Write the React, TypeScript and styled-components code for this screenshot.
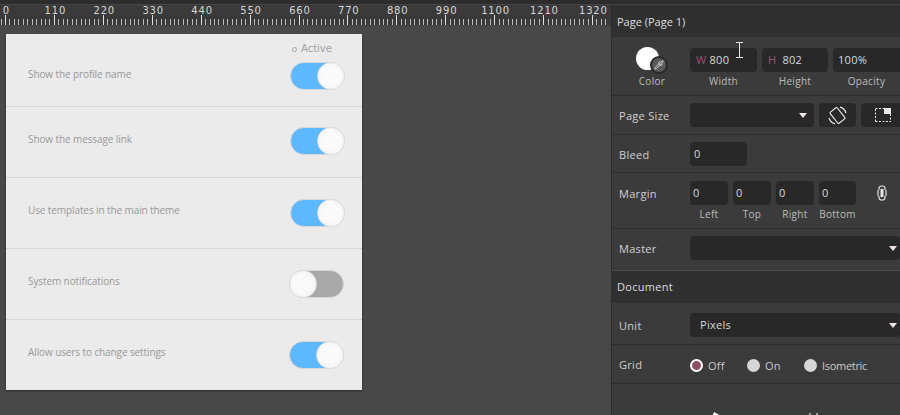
import React from "react";
import styled, { createGlobalStyle } from "styled-components";
import { Pipette } from "lucide-react";

const Global = createGlobalStyle`
  html, body { margin: 0; padding: 0; background: #484848; }
  body { font-family: "Open Sans", "Noto Sans", sans-serif; }
`;

const Shell = styled.div`
  position: relative;
  width: 900px;
  height: 415px;
  overflow: hidden;
  display: flex;
  flex-direction: column;
  background: #484848;
`;
const TopStrip = styled.div`
  height: 4px;
  background: #2d2d2d;
  border-bottom: 1px solid #444;
  flex: none;
`;
const Body = styled.div`
  flex: 1;
  min-height: 0;
  display: grid;
  grid-template-columns: 611px 289px;
`;
const CanvasColumn = styled.div`
  display: flex;
  flex-direction: column;
  min-width: 0;
`;
const Ruler = styled.div`
  height: 20px;
  background: #3a3a3a;
  flex: none;
  display: flex;
  flex-direction: column;
  overflow: hidden;
`;
const RulerLabels = styled.div`
  display: flex;
  height: 10px;
`;
const RulerLabel = styled.span<{ $shift?: number }>`
  flex: none;
  width: 48.92px;
  text-align: center;
  font: 10px/12px "DejaVu Sans", sans-serif;
  letter-spacing: 0.8px;
  color: #d6d6d6;
  margin-left: ${(p) => p.$shift ?? 0}px;
`;
const Stage = styled.div`
  flex: 1;
  padding: 9px 0 0 6px;
`;
const Card = styled.div`
  width: 356px;
  height: 356px;
  background: #ebebeb;
  box-shadow: 0 1px 2px rgba(0, 0, 0, 0.45);
  display: flex;
  flex-direction: column;
`;
const Row = styled.div<{ $first?: boolean; $inset: number; $lift?: number }>`
  height: ${(p) => (p.$first ? 73 : 71)}px;
  flex: none;
  box-sizing: border-box;
  display: flex;
  justify-content: space-between;
  align-items: ${(p) => (p.$first ? "flex-end" : "center")};
  padding: 0 ${(p) => p.$inset}px ${(p) => (p.$first ? 16 : (p.$lift ?? 0))}px 22px;
  border-bottom: 1px solid #d4d4d4;
  &:last-child { border-bottom: none; height: 70px; }
`;
const RowLabel = styled.span<{ $raise: number }>`
  font-size: 10px;
  line-height: 14px;
  letter-spacing: -0.1px;
  color: #999;
  margin-bottom: ${(p) => p.$raise}px;
`;
const SwitchStack = styled.div`
  display: flex;
  flex-direction: column;
  align-items: flex-end;
  gap: 6px;
`;
const ActiveLabel = styled.span`
  display: flex;
  align-items: center;
  gap: 4px;
  width: 53px;
  box-sizing: border-box;
  font: 10px/14px "DejaVu Sans", sans-serif;
  color: #a2a2a2;
  &::before {
    content: "";
    width: 3px;
    height: 3px;
    border: 1px solid #a2a2a2;
    border-radius: 50%;
  }
`;
const Switch = styled.div<{ $on: boolean }>`
  width: 55px;
  height: 28px;
  box-sizing: border-box;
  border-radius: 14px;
  border: 1px solid #d6d6d6;
  background: ${(p) => (p.$on ? "#5eb8ff" : "#a9a9a9")};
  display: flex;
  justify-content: ${(p) => (p.$on ? "flex-end" : "flex-start")};
`;
const Knob = styled.div`
  width: 28px;
  height: 28px;
  margin: -1px;
  border-radius: 50%;
  background: radial-gradient(circle at 50% 50%, #fafafa 45%, #f0f0f0 100%);
  border: 1px solid #dedede;
  box-sizing: border-box;
`;

const Panel = styled.div`
  background: #3b3b3b;
  border-left: 1px solid #2b2b2b;
  display: flex;
  flex-direction: column;
  font-size: 11px;
  letter-spacing: 0.3px;
  color: #d4d4d4;
  min-width: 0;
`;
const Header = styled.div<{ $tight?: boolean; $raise?: number }>`
  height: 32px;
  flex: none;
  box-sizing: border-box;
  background: #303030;
  padding: 0 0 ${(p) => p.$raise ?? 0}px 5px;
  display: flex;
  align-items: center;
  font-size: 11px;
  letter-spacing: ${(p) => (p.$tight ? 0 : 0.3)}px;
  color: #dedede;
`;
const PanelRow = styled.div<{ $h: number; $top: number; $light?: boolean }>`
  height: ${(p) => p.$h}px;
  flex: none;
  box-sizing: border-box;
  padding: ${(p) => p.$top}px 0 0 7px;
  display: grid;
  grid-template-columns: 71px 1fr;
  align-items: start;
  border-bottom: 1px solid ${(p) => (p.$light ? "#4b4b4b" : "#2f2f2f")};
`;
const RowName = styled.div`
  line-height: 24px;
  padding-top: 1px;
  color: #d0d0d0;
`;
const Controls = styled.div`
  display: flex;
  gap: 5px;
  min-width: 0;
`;
const Swatch = styled.div`
  position: relative;
  width: 23px;
  height: 23px;
  margin: -1px 0 0 17px;
  border-radius: 50%;
  background: #fff;
`;
const SwatchBadge = styled.div`
  position: absolute;
  left: 14px;
  top: 9px;
  width: 18px;
  height: 18px;
  border-radius: 50%;
  background: #5a5a5a;
  border: 2px solid #2a2a2a;
  box-sizing: border-box;
  display: flex;
  align-items: center;
  justify-content: center;
  color: #f0f0f0;
`;
const ColorCell = styled.div`
  display: flex;
  flex-direction: column;
`;
const Caption = styled.div`
  font-size: 10px;
  line-height: 14px;
  color: #bdbdbd;
  text-align: center;
  margin-top: 2px;
`;
const ColorCaption = styled(Caption)`
  width: 50px;
  margin: 4px 0 0 8px;
`;
const OpacityCaption = styled(Caption)`
  width: 67px;
`;
const Field = styled.div<{ $w: number }>`
  width: ${(p) => p.$w}px;
  flex: none;
`;
const Box = styled.div<{ $w?: number; $pad?: number }>`
  width: ${(p) => (p.$w ? `${p.$w}px` : "auto")};
  height: 24px;
  flex: ${(p) => (p.$w ? "none" : "1")};
  box-sizing: border-box;
  background: #282828;
  border-radius: 4px;
  padding: 0 ${(p) => p.$pad ?? 5}px;
  display: flex;
  align-items: center;
  justify-content: space-between;
  line-height: 22px;
  color: #d8d8d8;
`;
const UnitMark = styled.span<{ $gap: number }>`
  color: #9a5470;
  margin-right: ${(p) => p.$gap}px;
`;
const Inline = styled.span`
  display: flex;
`;
const IconBox = styled.div<{ $w: number; $pad: number }>`
  width: ${(p) => p.$w}px;
  height: 24px;
  flex: none;
  background: #282828;
  border-radius: 4px;
  display: flex;
  align-items: center;
  padding-left: ${(p) => p.$pad}px;
  box-sizing: border-box;
  color: #e8e8e8;
`;
const Arrow = styled.span<{ $right: number }>`
  width: 0;
  height: 0;
  border-left: 4px solid transparent;
  border-right: 4px solid transparent;
  border-top: 5px solid #eee3e7;
  margin-right: ${(p) => p.$right}px;
`;
const LinkCell = styled.div`
  display: flex;
  align-items: center;
  height: 24px;
  margin-left: 16px;
  color: #e4e4e4;
`;
const RadioRow = styled.div`
  display: flex;
  height: 24px;
  padding-top: 1px;
  align-items: center;
`;
const RadioItem = styled.label`
  width: 57px;
  display: flex;
  align-items: center;
  gap: 5px;
  color: #c8c8c8;
  &:last-child { width: auto; letter-spacing: -0.3px; }
`;
const RadioDot = styled.span<{ $on?: boolean }>`
  width: 13px;
  height: 13px;
  box-sizing: border-box;
  border-radius: 50%;
  background: ${(p) => (p.$on ? "#8d4f68" : "#d6d6d6")};
  border: ${(p) => (p.$on ? "2px solid #fff" : "none")};
`;
const BottomRow = styled.div`
  flex: 1;
  display: flex;
  gap: 84px;
  padding: 28px 0 0 97px;
  color: #fff;
`;
const IBeam = styled.svg`
  position: absolute;
  left: 736px;
  top: 42px;
`;

const Ticks = () => {
  const lines: React.ReactNode[] = [];
  const step = 48.92 / 11;
  for (let i = -1; 6 + i * step < 609; i++) {
    const x = Math.round(6 + i * step) - 0.5;
    const major = i % 11 === 0;
    lines.push(<line key={i} x1={x} x2={x} y1={major ? 0 : 4} y2={10} stroke={major ? "#e0e0e0" : "#bcbcbc"} />);
  }
  return (
    <svg width={611} height={10} style={{ display: "block" }}>
      {lines}
    </svg>
  );
};

const rows = [
  { text: "Show the profile name", on: true, inset: 17, first: true, lift: 0, raise: 9 },
  { text: "Show the message link", on: true, inset: 17, lift: 2, raise: 5 },
  { text: "Use templates in the main theme", on: true, inset: 17, lift: 0, raise: 7 },
  { text: "System notifications", on: false, inset: 18, lift: 0, raise: 7 },
  { text: "Allow users to change settings", on: true, inset: 18, lift: 0, raise: 7 },
];

const marks = [0, 110, 220, 330, 440, 550, 660, 770, 880, 990, 1100, 1210, 1320];

export default function App() {
  return (
    <Shell>
      <Global />
      <TopStrip />
      <Body>
        <CanvasColumn>
          <Ruler>
            <RulerLabels>
              {marks.map((m, i) => (
                <RulerLabel key={m} $shift={i === 0 ? -18 : 0}>
                  {m}
                </RulerLabel>
              ))}
            </RulerLabels>
            <Ticks />
          </Ruler>
          <Stage>
            <Card>
              {rows.map((r) => (
                <Row key={r.text} $first={r.first} $inset={r.inset} $lift={r.lift}>
                  <RowLabel $raise={r.raise}>{r.text}</RowLabel>
                  <SwitchStack>
                    {r.first && <ActiveLabel>Active</ActiveLabel>}
                    <Switch $on={r.on}>
                      <Knob />
                    </Switch>
                  </SwitchStack>
                </Row>
              ))}
            </Card>
          </Stage>
        </CanvasColumn>
        <Panel>
          <Header $tight>Page (Page 1)</Header>
          <PanelRow $h={59} $top={11}>
            <ColorCell>
              <Swatch>
                <SwatchBadge>
                  <Pipette size={10} strokeWidth={2} />
                </SwatchBadge>
              </Swatch>
              <ColorCaption>Color</ColorCaption>
            </ColorCell>
            <Controls>
              <Field $w={67}>
                <Box $pad={6}>
                  <Inline>
                    <UnitMark $gap={3}>W</UnitMark>800
                  </Inline>
                </Box>
                <Caption>Width</Caption>
              </Field>
              <Field $w={66}>
                <Box $pad={6}>
                  <Inline>
                    <UnitMark $gap={6}>H</UnitMark>802
                  </Inline>
                </Box>
                <Caption>Height</Caption>
              </Field>
              <Field $w={80}>
                <Box>100%</Box>
                <OpacityCaption>Opacity</OpacityCaption>
              </Field>
            </Controls>
          </PanelRow>
          <PanelRow $h={39} $top={7}>
            <RowName>Page Size</RowName>
            <Controls>
              <Box $w={124}>
                <span />
                <Arrow $right={2} />
              </Box>
              <IconBox $w={37} $pad={9}>
                <svg width={19} height={19} viewBox="0 0 19 19" fill="none" stroke="currentColor" strokeWidth={1.2}>
                  <rect x="5" y="2.5" width="9" height="14" rx="1" transform="rotate(-38 9.5 9.5)" />
                  <path d="M12 1.2A8.5 8.5 0 0 1 18 7" />
                  <path d="M7 17.8A8.5 8.5 0 0 1 1 12" />
                </svg>
              </IconBox>
              <IconBox $w={50} $pad={14}>
                <svg width={16} height={14} viewBox="0 0 16 14">
                  <path d="M.5 1V14M.5 13.5H16M15.5 6V14M.5 .5H9" fill="none" stroke="#e8e8e8" strokeWidth={1} strokeDasharray="2 1.5" />
                  <rect x="9" y="0" width="7" height="6" fill="#e8e8e8" />
                </svg>
              </IconBox>
            </Controls>
          </PanelRow>
          <PanelRow $h={38} $top={7}>
            <RowName>Bleed</RowName>
            <Controls>
              <Box $w={57} $pad={4}>0</Box>
            </Controls>
          </PanelRow>
          <PanelRow $h={56} $top={8}>
            <RowName>Margin</RowName>
            <Controls>
              <Field $w={38}>
                <Box $pad={3}>0</Box>
                <Caption>Left</Caption>
              </Field>
              <Field $w={38}>
                <Box $pad={3}>0</Box>
                <Caption>Top</Caption>
              </Field>
              <Field $w={38}>
                <Box $pad={3}>0</Box>
                <Caption>Right</Caption>
              </Field>
              <Field $w={37}>
                <Box $pad={3}>0</Box>
                <Caption>Bottom</Caption>
              </Field>
              <LinkCell>
                <svg width={10} height={16} viewBox="0 0 10 16" fill="none" stroke="currentColor" strokeWidth={1.2}>
                  <path d="M2 5V3.5A2.5 2.5 0 0 1 4.5 1h1A2.5 2.5 0 0 1 8 3.5V5" />
                  <path d="M2 11v1.5A2.5 2.5 0 0 0 4.5 15h1A2.5 2.5 0 0 0 8 12.5V11" />
                  <path d="M1 5v6M9 5v6" />
                  <rect x="3.5" y="4" width="3" height="8" fill="currentColor" stroke="none" />
                </svg>
              </LinkCell>
            </Controls>
          </PanelRow>
          <PanelRow $h={42} $top={7} $light>
            <RowName>Master</RowName>
            <Controls>
              <Box>
                <span />
                <Arrow $right={-2} />
              </Box>
            </Controls>
          </PanelRow>
          <Header $raise={2}>Document</Header>
          <PanelRow $h={42} $top={10}>
            <RowName>Unit</RowName>
            <Controls>
              <Box $pad={10}>
                Pixels
                <Arrow $right={-7} />
              </Box>
            </Controls>
          </PanelRow>
          <PanelRow $h={39} $top={7}>
            <RowName>Grid</RowName>
            <RadioRow>
              <RadioItem>
                <RadioDot $on />
                Off
              </RadioItem>
              <RadioItem>
                <RadioDot />
                On
              </RadioItem>
              <RadioItem>
                <RadioDot />
                Isometric
              </RadioItem>
            </RadioRow>
          </PanelRow>
          <BottomRow>
            <svg width={14} height={14} viewBox="0 0 14 14" fill="#fff">
              <path d="M3 5L5 0L12 4L12 14H2Z" />
            </svg>
            <svg width={14} height={14} viewBox="0 0 14 14" fill="none" stroke="#fff">
              <path d="M3 1V14M10 1V14" />
            </svg>
          </BottomRow>
        </Panel>
      </Body>
      <IBeam width={7} height={16} viewBox="0 0 7 16" fill="none" stroke="#e6e6e6">
        <path d="M0 .5H7M0 15.5H7M3.5 .5V15.5" />
      </IBeam>
    </Shell>
  );
}
